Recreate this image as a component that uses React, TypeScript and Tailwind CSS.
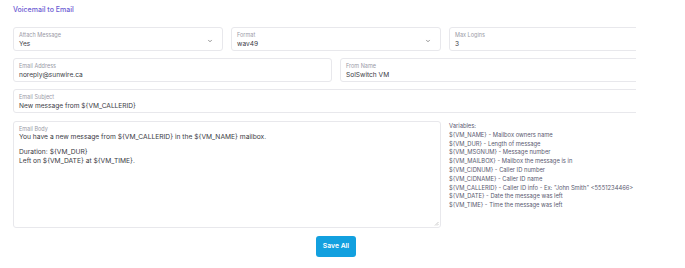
import { ChevronDown } from "lucide-react";

const Field = ({ label, value, select }: { label: string; value: string; select?: boolean }) => (
    <div className="h-[24px] border border-[#e8e8ec] rounded-[3px] px-[5px] pt-[3px] flex items-center">
        <div className="flex-1 min-w-0">
            <p className="text-[5.5px] leading-[7px] text-[#9a9aa6]">{label}</p>
            <p className="text-[6.6px] leading-[10px] text-[#3b3b45]">{value}</p>
        </div>
        {select && <ChevronDown className="w-[6px] h-[6px] text-[#555] mr-[4px]" strokeWidth={2.5} />}
    </div>
);

const vars = [
    "${VM_NAME} - Mailbox owners name",
    "${VM_DUR} - Length of message",
    "${VM_MSGNUM} - Message number",
    "${VM_MAILBOX} - Mailbox the message is in",
    "${VM_CIDNUM} - Caller ID number",
    "${VM_CIDNAME} - Caller ID name",
    '${VM_CALLERID} - Caller ID info - Ex: "John Smith" <5551234466>',
    "${VM_DATE} - Date the message was left",
    "${VM_TIME} - Time the message was left",
];

const App = () => {
    return (
        <main className="w-[685px] h-[268px] bg-white overflow-hidden" style={{ fontFamily: "Inter, sans-serif" }}>
            <div className="w-[636px] overflow-hidden">
                <div className="w-[659px] pl-[13px] pt-[5px]">
                    <h3 className="text-[7px] leading-[10px] text-[#6c5dd3] font-medium mb-[12px]">
                        Voicemail to Email
                    </h3>

                    <div className="grid grid-cols-3 gap-x-[8px]">
                        <Field label="Attach Message" value="Yes" select />
                        <Field label="Format" value="wav49" select />
                        <Field label="Max Logins" value="3" />
                    </div>

                    <div className="grid grid-cols-2 gap-x-[8px] mt-[7px]">
                        <Field label="Email Address" value="noreply@sunwire.ca" />
                        <Field label="From Name" value="SolSwitch VM" />
                    </div>

                    <div className="mt-[7px]">
                        <Field label="Email Subject" value="New message from ${VM_CALLERID}" />
                    </div>

                    <div className="grid grid-cols-3 gap-x-[8px] mt-[8px]">
                        {/* Body */}
                        <div className="col-span-2 h-[107px] border border-[#e8e8ec] rounded-[3px] px-[5px] pt-[4px] relative">
                            <p className="text-[5.5px] leading-[7px] text-[#9a9aa6]">Email Body</p>
                            <div className="text-[6.7px] leading-[9px] text-[#3b3b45]">
                                <p>You have a new message from ${"{VM_CALLERID}"} in the ${"{VM_NAME}"} mailbox.</p>
                                <div className="h-[6px]" />
                                <p>Duration: ${"{VM_DUR}"}</p>
                                <p>Left on ${"{VM_DATE}"} at ${"{VM_TIME}"}.</p>
                            </div>
                            <svg className="absolute right-[1px] bottom-[1px]" width="5" height="5" viewBox="0 0 5 5">
                                <path d="M4.5 1 L1 4.5 M4.5 3 L3 4.5" stroke="#aaa" strokeWidth="0.6" />
                            </svg>
                        </div>

                        {/* Variables */}
                        <div className="pt-[1px] text-[5.8px] leading-[8.8px] text-[#5a5a70] whitespace-nowrap">
                            <p>Variables:</p>
                            {vars.map((v) => (
                                <p key={v}>{v}</p>
                            ))}
                        </div>
                    </div>
                </div>
            </div>

            <div className="flex justify-center w-[672px] mt-[8px]">
                <button className="h-[21px] px-[7px] rounded-[3px] bg-[#12a0df] text-white text-[6.8px] font-semibold">
                    Save All
                </button>
            </div>
        </main>
    );
};

export default App;
